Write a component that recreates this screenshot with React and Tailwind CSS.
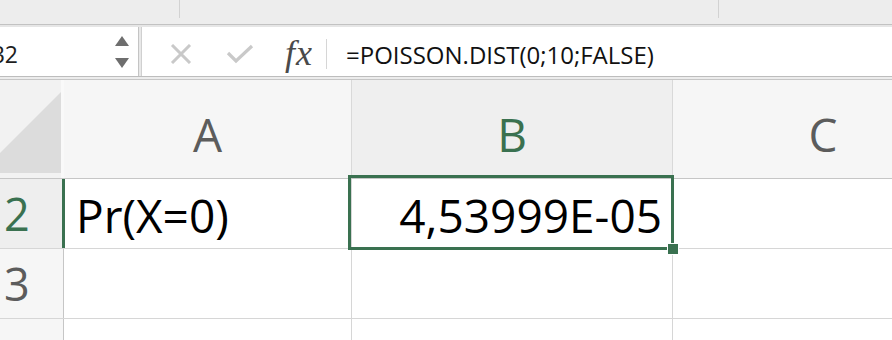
import React from 'react';

const green = 'text-[#3a7150]';

function ColHeader({ label, width, active, last }) {
  return (
    <div
      className={`h-full flex items-center justify-center pt-[9px] shrink-0 ${
        last ? '' : 'border-r border-[#d9d9d9]'
      } ${active ? 'bg-[#efefef] text-[#3a7150]' : 'bg-[#f6f6f6] text-[#5c5c5c]'}`}
      style={{ width }}
    >
      <span className="text-[46px] leading-none">{label}</span>
    </div>
  );
}

function App() {
  return (
    <div
      className="w-[892px] h-[340px] overflow-hidden bg-white flex flex-col"
      style={{ fontFamily: '"Open Sans", "Noto Sans", sans-serif' }}
    >
      {/* ribbon strip remnant */}
      <div className="h-[24px] shrink-0 bg-[#ededed] flex">
        <div className="w-[180px] h-[18px] border-r border-[#d2d2d2]"></div>
        <div className="w-[539px] h-[18px] border-r border-[#d2d2d2]"></div>
      </div>
      <div className="h-px shrink-0 bg-[#c2c2c2]"></div>
      <div className="h-[2px] shrink-0 bg-[#e6e6e6]"></div>

      {/* formula bar */}
      <div className="h-[49px] shrink-0 flex">
        <div className="w-[139px] bg-white border-r border-[#c4c4c4] flex items-center justify-between pr-[9px] overflow-hidden">
          <span className="-ml-[10px] pt-[6px] text-[23px] text-[#1e1e1e]">B2</span>
          <div className="flex flex-col gap-[12px]">
            <svg width="14" height="10" viewBox="0 0 14 10">
              <polygon points="7,0 14,10 0,10" fill="#6e6e6e" />
            </svg>
            <svg width="14" height="10" viewBox="0 0 14 10">
              <polygon points="0,0 14,0 7,10" fill="#6e6e6e" />
            </svg>
          </div>
        </div>
        <div className="w-[2px] bg-[#e8e8e8]"></div>
        <div className="flex-1 bg-white flex items-center pl-[28px] border-l border-[#d0d0d0]">
          <svg width="22" height="20" viewBox="0 0 22 20" className="mt-[4px]">
            <path d="M2 1 L20 19 M20 1 L2 19" stroke="#c9c9c9" strokeWidth="3" />
          </svg>
          <svg width="28" height="20" viewBox="0 0 28 20" className="ml-[34px] mt-[4px]">
            <path d="M2 9 L10 17 L26 2" stroke="#c9c9c9" strokeWidth="3.2" fill="none" />
          </svg>
          <span
            className="ml-[31px] mt-[2px] text-[36px] italic text-[#4a4a4a] leading-none tracking-[1px]"
            style={{ fontFamily: '"Liberation Serif", serif' }}
          >
            fx
          </span>
          <div className="ml-[13px] mt-[4px] w-px h-[30px] bg-[#d6d6d6]"></div>
          <span className="ml-[19px] pt-[6px] text-[24px] text-[#111]">
            =POISSON.DIST(0;10;FALSE)
          </span>
        </div>
      </div>
      <div className="h-px shrink-0 bg-[#bdbdbd]"></div>
      <div className="h-[2px] shrink-0 bg-[#ececec]"></div>
      <div className="h-px shrink-0 bg-[#c6c6c6]"></div>

      {/* column headers */}
      <div className="h-[99px] shrink-0 flex border-b border-[#c6c6c6]">
        <div className="w-[64px] shrink-0 bg-[#f2f2f2] border-r-[3px] border-[#f9f9f9] relative overflow-hidden">
          <svg width="61" height="98" viewBox="0 0 61 98" className="block">
            <polygon points="61,12 61,93 -20,93" fill="#dcdcdc" />
          </svg>
        </div>
        <ColHeader label="A" width={288} />
        <ColHeader label="B" width={321} active />
        <ColHeader label="C" width={300} last />
      </div>

      {/* row 2 */}
      <div className="h-[70px] shrink-0 flex border-b border-[#d6d6d6]">
        <div className="w-[65px] shrink-0 bg-[#eeeeee] border-r-[3px] border-[#3a7150] flex items-center pl-[4px]">
          <span className={`text-[45px] leading-none ${green}`}>2</span>
        </div>
        <div className="w-[287px] shrink-0 border-r border-[#d6d6d6] flex items-center pl-[11px] pt-[3px]">
          <span className="text-[46px] leading-none text-black">Pr(X=0)</span>
        </div>
        <div className="w-[321px] shrink-0 border-r border-[#d6d6d6] relative flex items-center justify-end pr-[10px] pt-[3px]">
          <span className="text-[46px] leading-none text-black">4,53999E-05</span>
          <div className="absolute -left-[4px] -top-[4px] -right-[2px] -bottom-[2px] border-[3px] border-[#3a7150]"></div>
          <div className="absolute left-[315px] top-[64px] w-[12px] h-[12px] bg-[#3a7150] border border-white"></div>
        </div>
        <div className="flex-1"></div>
      </div>

      {/* row 3 */}
      <div className="h-[70px] shrink-0 flex border-b border-[#d6d6d6]">
        <div className="w-[64px] shrink-0 bg-[#f6f6f6] border-r border-[#c6c6c6] flex items-center pl-[4px]">
          <span className="text-[45px] leading-none text-[#5c5c5c]">3</span>
        </div>
        <div className="w-[288px] shrink-0 border-r border-[#d6d6d6]"></div>
        <div className="w-[321px] shrink-0 border-r border-[#d6d6d6]"></div>
        <div className="flex-1"></div>
      </div>

      {/* row 4 (cut off) */}
      <div className="h-[70px] shrink-0 flex">
        <div className="w-[64px] shrink-0 bg-[#f6f6f6] border-r border-[#c6c6c6] flex items-start pl-[4px] pt-[18px]">
          <span className="text-[45px] leading-none text-[#5c5c5c]">4</span>
        </div>
        <div className="w-[288px] shrink-0 border-r border-[#d6d6d6]"></div>
        <div className="w-[321px] shrink-0 border-r border-[#d6d6d6]"></div>
        <div className="flex-1"></div>
      </div>
    </div>
  );
}

export default App;
